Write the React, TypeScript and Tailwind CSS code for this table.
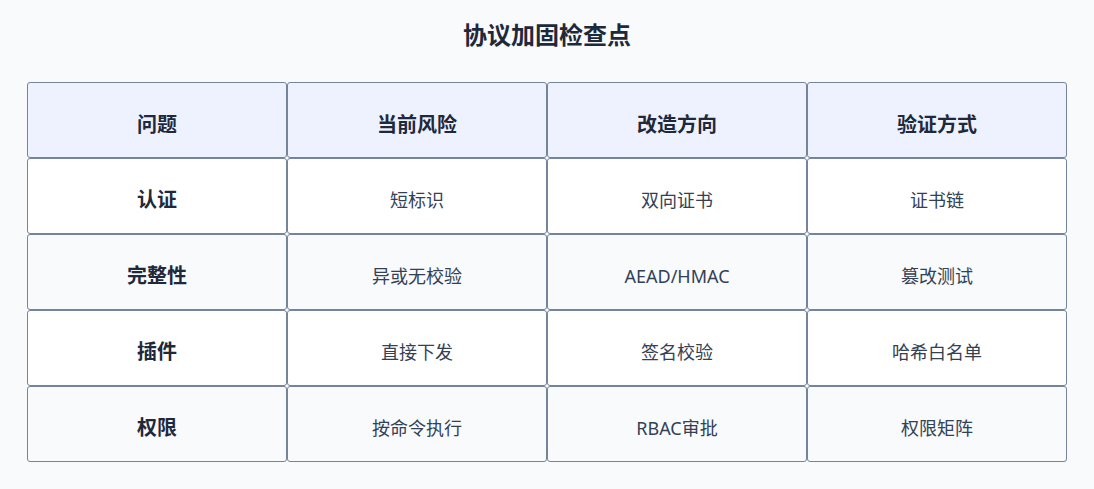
const headers = ["问题", "当前风险", "改造方向", "验证方式"];

const rows = [
  ["认证", "短标识", "双向证书", "证书链"],
  ["完整性", "异或无校验", "AEAD/HMAC", "篡改测试"],
  ["插件", "直接下发", "签名校验", "哈希白名单"],
  ["权限", "按命令执行", "RBAC审批", "权限矩阵"],
];

export default function App() {
  return (
    <div
      className="w-[1094px] h-[489px] bg-[#f8fafc] flex flex-col items-center pt-[19px]"
      style={{ fontFamily: '"Noto Sans", "Noto Sans CJK SC", sans-serif' }}
    >
      <h1 className="h-[32px] leading-[32px] text-[24px] font-bold text-[#1e293b]">
        协议加固检查点
      </h1>

      <div className="mt-[31px] grid grid-cols-[repeat(4,260px)] grid-rows-[repeat(5,76px)]">
        {headers.map((h) => (
          <div
            key={h}
            className="flex items-center justify-center pt-[9px] rounded-[3px] border border-[#74849b] bg-[#eef2ff] text-[20px] font-bold text-[#1e293b]"
          >
            {h}
          </div>
        ))}
        {rows.map((row, i) =>
          row.map((cell, j) => (
            <div
              key={i + "-" + j}
              className={
                "flex items-center justify-center pt-[8px] rounded-[3px] border border-[#74849b] " +
                (i % 2 === 0 ? "bg-white " : "bg-[#f8fafc] ") +
                (j === 0
                  ? "text-[20px] font-bold text-[#1e293b]"
                  : "text-[18px] text-[#334155]")
              }
            >
              {cell}
            </div>
          ))
        )}
      </div>
    </div>
  );
}
